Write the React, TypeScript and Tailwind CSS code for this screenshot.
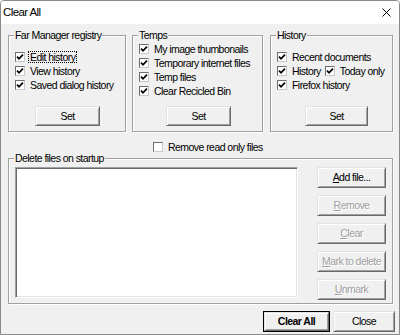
import React from 'react';

function Check({ checked }: { checked?: boolean }) {
  return (
    <span className="w-[10px] h-[10px] shrink-0 bg-white border border-t-[#6e6e6e] border-l-[#6e6e6e] border-r-[#c8c8c8] border-b-[#c8c8c8] flex items-center justify-center">
      {checked && (
        <svg width="8" height="8" viewBox="0 0 8 8">
          <path d="M1 3.6 L3 5.8 L7 1.6" stroke="#000" strokeWidth="1.7" fill="none" />
        </svg>
      )}
    </span>
  );
}

function Row({ label, checked = true, focus }: { label: string; checked?: boolean; focus?: boolean }) {
  return (
    <div className="h-[14px] flex items-center gap-[5px] whitespace-nowrap">
      <Check checked={checked} />
      <span className={focus ? 'outline outline-1 outline-dotted outline-black px-[1px] -ml-[1px]' : ''}>{label}</span>
    </div>
  );
}

function Btn({
  children,
  className = '',
  disabled,
  bold,
}: {
  children: React.ReactNode;
  className?: string;
  disabled?: boolean;
  bold?: boolean;
}) {
  return (
    <div
      className={`flex items-center justify-center whitespace-nowrap bg-[#f0f0f0] border border-t-[#e3e3e3] border-l-[#e3e3e3] border-r-[#696969] border-b-[#696969] shadow-[inset_1px_1px_0_#fff,inset_-1px_-1px_0_#a0a0a0] ${
        disabled ? 'text-[#a0a0a0] [text-shadow:1px_1px_0_#fff]' : 'text-black'
      } ${bold ? 'font-bold' : ''} ${className}`}
    >
      {children}
    </div>
  );
}

function Group({
  title,
  className = '',
  children,
}: {
  title: string;
  className?: string;
  children: React.ReactNode;
}) {
  return (
    <div
      className={`relative border border-[#a0a0a0] shadow-[inset_1px_1px_0_#fff,1px_1px_0_#fff] flex flex-col ${className}`}
    >
      <span className="absolute -top-[7px] left-[5px] bg-[#f0f0f0] px-[1px] leading-[13px] whitespace-nowrap">{title}</span>
      {children}
    </div>
  );
}

export default function App() {
  return (
    <div className="w-[400px] h-[335px] bg-[#f0f0f0] border border-[#8a8a8a] rounded-t-[4px] flex flex-col text-[10.5px] tracking-[-0.55px] leading-none text-black font-['Liberation_Sans',Arial,sans-serif] select-none overflow-hidden">
      {/* title bar */}
      <div className="h-[23px] bg-white flex items-center justify-between pl-[2px] pr-[8px] shrink-0">
        <span className="text-[11.5px] tracking-[-0.6px]">Clear All</span>
        <svg width="9" height="9" viewBox="0 0 9 9">
          <path d="M0.5 0.5 L8.5 8.5 M8.5 0.5 L0.5 8.5" stroke="#000" strokeWidth="1" />
        </svg>
      </div>

      <div className="flex flex-col pl-[7px] pt-[11px]">
        {/* top groups */}
        <div className="flex">
          <Group title="Far Manager registry" className="w-[118px] h-[97px] pt-[14px] pl-[6px]">
            <Row label="Edit history" focus />
            <Row label="View history" />
            <Row label="Saved dialog history" />
            <Btn className="mt-auto mb-[5px] ml-[20px] w-[65px] h-[20px]">Set</Btn>
          </Group>

          <Group title="Temps" className="ml-[6px] w-[131px] h-[97px] pt-[6px] pl-[6px]">
            <Row label="My image thumbonails" />
            <Row label="Temporary internet files" />
            <Row label="Temp files" />
            <Row label="Clear Recicled Bin" />
            <Btn className="mt-auto mb-[5px] ml-[27px] w-[65px] h-[20px]">Set</Btn>
          </Group>

          <Group title="History" className="ml-[7px] w-[123px] h-[97px] pt-[14px] pl-[6px]">
            <Row label="Recent documents" />
            <div className="flex items-center gap-[4px]">
              <Row label="History" />
              <Row label="Today only" />
            </div>
            <Row label="Firefox history" />
            <Btn className="mt-auto mb-[5px] ml-[28px] w-[63px] h-[20px]">Set</Btn>
          </Group>
        </div>

        {/* remove read only */}
        <div className="mt-[8px] ml-[145px]">
          <Row label="Remove read only files" checked={false} />
        </div>

        {/* delete files group */}
        <Group title="Delete files on startup" className="mt-[4px] w-[385px] h-[146px] pt-[8px] pl-[6px]">
          <div className="flex">
            <div className="w-[283px] h-[131px] bg-white border border-t-[#a0a0a0] border-l-[#a0a0a0] border-r-white border-b-white shadow-[inset_1px_1px_0_#696969,inset_-1px_-1px_0_#e3e3e3]" />
            <div className="ml-[19px] flex flex-col gap-[7px]">
              <Btn className="w-[69px] h-[21px]">
                <span><u>A</u>dd file...</span>
              </Btn>
              <Btn disabled className="w-[69px] h-[21px]">
                <span><u>R</u>emove</span>
              </Btn>
              <Btn disabled className="w-[69px] h-[21px]">
                <span><u>C</u>lear</span>
              </Btn>
              <Btn disabled className="w-[69px] h-[21px]">
                <span><u>M</u>ark to delete</span>
              </Btn>
              <Btn disabled className="w-[69px] h-[21px]">
                <span><u>U</u>nmark</span>
              </Btn>
            </div>
          </div>
        </Group>

        {/* bottom buttons */}
        <div className="mt-[7px] ml-[255px] flex">
          <div className="w-[67px] h-[21px] border border-black flex">
            <Btn bold className="flex-1">Clear All</Btn>
          </div>
          <Btn className="ml-[3px] w-[62px] h-[21px]">Close</Btn>
        </div>
      </div>
    </div>
  );
}
